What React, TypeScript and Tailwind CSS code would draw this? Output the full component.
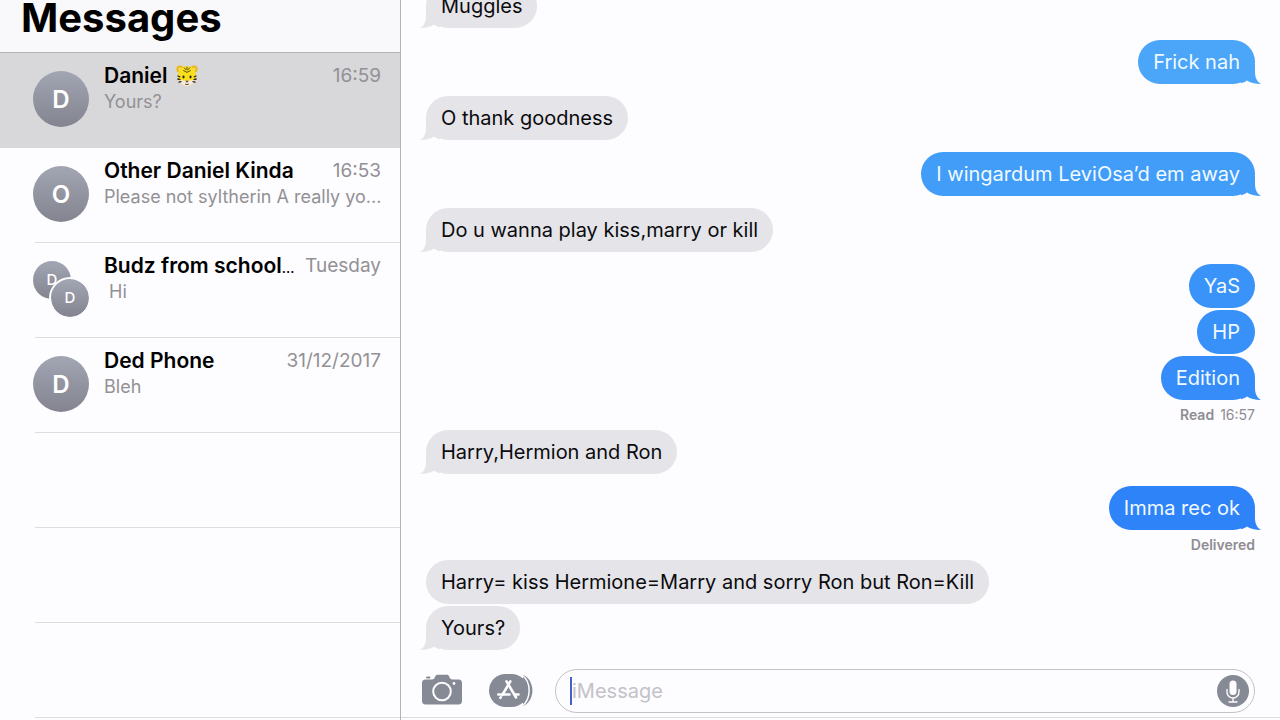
import cx from 'clsx';

type Conversation = {
	name: string;
	time: string;
	preview: string;
	initials: string[];
	tiger?: boolean;
	indent?: boolean;
	shortened?: boolean;
};

type Message = {
	text: string;
	mine?: boolean;
	tail?: boolean;
	color?: string;
	status?: { label: string; time?: string };
};

const conversations: Conversation[] = [
	{ name: 'Daniel', time: '16:59', preview: 'Yours?', initials: ['D'], tiger: true },
	{
		name: 'Other Daniel Kinda',
		time: '16:53',
		preview: 'Please not syltherin A really yo...',
		initials: ['O']
	},
	{
		name: 'Budz from school',
		time: 'Tuesday',
		preview: 'Hi',
		initials: ['D', 'D'],
		indent: true,
		shortened: true
	},
	{ name: 'Ded Phone', time: '31/12/2017', preview: 'Bleh', initials: ['D'] }
];

// consecutive messages of one sender are grouped together
const groups: Message[][] = [
	[{ text: 'Muggles', tail: true }],
	[{ text: 'Frick nah', mine: true, tail: true, color: 'bg-[#4ba5f9] text-[#4ba5f9]' }],
	[{ text: 'O thank goodness', tail: true }],
	[
		{
			text: 'I wingardum LeviOsa’d em away',
			mine: true,
			tail: true,
			color: 'bg-[#429df9] text-[#429df9]'
		}
	],
	[{ text: 'Do u wanna play kiss,marry or kill', tail: true }],
	[
		{ text: 'YaS', mine: true, color: 'bg-[#3a93f9] text-[#3a93f9]' },
		{ text: 'HP', mine: true, color: 'bg-[#3890f9] text-[#3890f9]' },
		{
			text: 'Edition',
			mine: true,
			tail: true,
			color: 'bg-[#368df9] text-[#368df9]',
			status: { label: 'Read', time: '16:57' }
		}
	],
	[{ text: 'Harry,Hermion and Ron', tail: true }],
	[
		{
			text: 'Imma rec ok',
			mine: true,
			tail: true,
			color: 'bg-[#2f83f8] text-[#2f83f8]',
			status: { label: 'Delivered' }
		}
	],
	[{ text: 'Harry= kiss Hermione=Marry and sorry Ron but Ron=Kill' }, { text: 'Yours?', tail: true }]
];

const Tiger = () => (
	<svg viewBox="0 0 24 24" className="ml-2 h-6 w-6 shrink-0" role="img" aria-label="tiger">
		<circle cx="5" cy="5" r="3.6" fill="#e9b813" />
		<circle cx="19" cy="5" r="3.6" fill="#e9b813" />
		<circle cx="5" cy="5" r="1.6" fill="#f3d98f" />
		<circle cx="19" cy="5" r="1.6" fill="#f3d98f" />
		<path
			d="M12 2.2C17.5 2.2 20.6 5.7 20.8 10.5C21 13 21.4 15.5 20.2 17.5C19 19.7 16 20.1 14.6 21.5C13.200 22.500 10.800 22.500 9.400 21.500C8 20.100 5 19.700 3.800 17.500C2.600 15.500 3 13 3.200 10.500C3.400 5.700 6.500 2.200 12 2.200Z"
			fill="#fbdf1c"
		/>
		<path
			d="M3.2 14.500C5.400 15 7 16.500 9.600 16.700H14.400C17 16.500 18.600 15 20.800 14.500C20.900 15.700 20.700 16.800 20.200 17.700C19 19.700 16 20.100 14.600 21.500C13.200 22.500 10.800 22.500 9.400 21.500C8 20.100 5 19.700 3.800 17.700C3.300 16.800 3.100 15.700 3.200 14.500Z"
			fill="#f4ece0"
		/>
		<g stroke="#4a4210" strokeWidth="0.900" strokeLinecap="round" fill="none">
			<path d="M12 3v3M9.300 3.800l1.400 1.700M14.700 3.800l-1.400 1.700M8.600 6.600l3.400 1.800 3.400-1.800" />
		</g>
		<g stroke="#2b2611" strokeWidth="1.300" strokeLinecap="round" fill="none">
			<path d="M3 12l1.700.8M2.800 15l2.200.6M4 18.200l2-.6M21 12l-1.700.8M21.200 15l-2.200.6M20 18.200l-2-.6" />
		</g>
		<ellipse cx="8.500" cy="13" rx="1.100" ry="1.400" fill="#2b2611" />
		<ellipse cx="15.500" cy="13" rx="1.100" ry="1.400" fill="#2b2611" />
		<path d="M10.300 16.800h3.400L12 18.700Z" fill="#54372c" />
		<path d="M10 20q2 1.200 4 0" stroke="#54372c" strokeWidth="0.900" fill="none" />
	</svg>
);

const avatarColors =
	'flex items-center justify-center rounded-full bg-linear-to-b from-[#a2a6b3] to-[#83848f] text-white';

const Avatar = ({ initials }: { initials: string[] }) => {
	if (initials.length > 1) {
		return (
			<span className="relative h-14 w-14 shrink-0">
				<span className={cx(avatarColors, 'h-[38px] w-[38px] text-[15px] font-medium')}>
					{initials[0]}
				</span>
				<span
					className={cx(
						avatarColors,
						'absolute -right-[2px] -bottom-[2px] box-content h-[38px] w-[38px] border-2 border-[#fdfcfe] bg-clip-padding text-[15px] font-medium'
					)}
				>
					{initials[1]}
				</span>
			</span>
		);
	}

	return (
		<span className={cx(avatarColors, 'h-14 w-14 shrink-0 pt-[2px] text-2xl font-semibold')}>
			{initials[0]}
		</span>
	);
};

const ConversationRow = ({ item, active }: { item: Conversation; active: boolean }) => (
	<li className={cx('h-[95px]', active && 'bg-[#d8d7da]')}>
		<button type="button" className="flex h-full w-full pl-[33px] text-left">
			<span className="flex h-full items-center pb-[3px]">
				<Avatar initials={item.initials} />
			</span>
			<span className="ml-[15px] flex h-full min-w-0 grow flex-col pt-[9px] pr-[19px]">
				<span className="flex h-7 items-center justify-between">
					<span className="flex min-w-0 items-center text-[21px] font-semibold whitespace-nowrap text-black">
						<span>
							{item.name}
							{item.shortened && <span className="text-sm font-medium">...</span>}
						</span>
						{item.tiger && <Tiger />}
					</span>
					<span className="shrink-0 text-[19px] text-[#929195]">{item.time}</span>
				</span>
				<span
					className={cx(
						'h-6 overflow-hidden text-[18px] leading-6 whitespace-nowrap text-[#929195]',
						item.indent && 'pl-[5px]'
					)}
				>
					{item.preview}
				</span>
			</span>
		</button>
		{!active && <div className="-mt-px ml-[35px] h-px bg-[#dddce1]" />}
	</li>
);

const Tail = ({ mine }: { mine?: boolean }) => (
	<svg
		viewBox="0 0 20 20"
		aria-hidden="true"
		className={cx('absolute bottom-0 h-5 w-5', mine ? '-right-[6px]' : '-left-[6px] -scale-x-100')}
	>
		<path
			d="M0 0H14V8C14 14 16 17.500 20 20C14 20 9 18.500 6 16.500C4 18 2 18.800 0 19.200Z"
			fill="currentColor"
		/>
	</svg>
);

const Bubble = ({ message }: { message: Message }) => (
	<div className={cx('flex flex-col', message.mine ? 'items-end' : 'items-start')}>
		<div
			className={cx(
				'relative flex h-11 items-center rounded-[22px] px-[15px]',
				message.mine ? message.color : 'bg-[#e5e4e9] text-[#e5e4e9]'
			)}
		>
			{message.tail && <Tail mine={message.mine} />}
			<span
				className={cx(
					'relative text-xl whitespace-nowrap',
					message.mine ? 'text-[#f0faff]' : 'text-[#0b0b0d]'
				)}
			>
				{message.text}
			</span>
		</div>
		{message.status && (
			<div className="-mb-3 flex h-[30px] items-center gap-[6px] text-sm text-[#8e8d93]">
				<span className="font-semibold">{message.status.label}</span>
				{message.status.time && <span>{message.status.time}</span>}
			</div>
		)}
	</div>
);

const Composer = () => (
	<form className="flex h-[49px] shrink-0 items-start border-b border-[#dddce1] pr-[25px] pl-[21px]">
		<button type="button" aria-label="Camera" className="h-11 w-10">
			<svg viewBox="0 0 40 44" className="h-11 w-10">
				<rect x="4" y="7.500" width="4.500" height="2" rx="1" fill="#858a95" />
				<path
					d="M3.500 10.500H10c1.500 0 2-.6 2.600-1.700l.9-1.700c.5-1 1-1.400 2.200-1.400h9c1.200 0 1.700.4 2.200 1.400l.9 1.700c.6 1.100 1.100 1.700 2.600 1.700h6.100c2.300 0 3.500 1.200 3.500 3.500v18c0 2.300-1.200 3.500-3.500 3.500h-33C1.200 35.500 0 34.300 0 32V14c0-2.300 1.200-3.500 3.500-3.500Z"
					fill="#858a95"
				/>
				<circle cx="20" cy="22.500" r="8.800" fill="none" stroke="#fdfcfe" strokeWidth="2" />
				<circle cx="32" cy="14.500" r="1.400" fill="#fdfcfe" />
			</svg>
		</button>
		<button type="button" aria-label="Apps" className="ml-[27px] h-11 w-11">
			<svg viewBox="0 0 44 44" className="h-11 w-11">
				<path d="M34 6C46.500 11 46.500 32 34 37Z" fill="#858a95" />
				<rect x="0" y="5" width="39" height="33" rx="16.500" fill="#858a95" />
				<path
					d="M33 6C42.500 13 42.500 30 33 37"
					fill="none"
					stroke="#fdfcfe"
					strokeWidth="1.500"
				/>
				<g stroke="#fdfcfe" strokeWidth="2.600" strokeLinecap="round" fill="none">
					<path d="M17.500 12.300l9.600 16.200" />
					<path d="M21.300 12.300l-8 13.700M11.800 28.300l-.4.600" />
					<path d="M9.300 25.500h11.200M25.800 25.500h3.700" />
				</g>
			</svg>
		</button>
		<div className="ml-[22px] flex h-11 grow items-center rounded-full border border-[#c3c2c8] bg-[#fdfcfe] pr-[5px] pl-[14px]">
			<span className="h-7 w-[2px] shrink-0 bg-[#3f62cf]" />
			<input
				type="text"
				aria-label="iMessage"
				placeholder="iMessage"
				className="h-full min-w-0 grow bg-transparent text-xl outline-none placeholder:text-[#c3c2c8]"
			/>
			<button type="button" aria-label="Dictate" className="h-8 w-8 shrink-0">
				<svg viewBox="0 0 32 32" className="h-8 w-8">
					<circle cx="16" cy="16" r="16" fill="#858a95" />
					<rect x="12.500" y="5.500" width="7" height="14.500" rx="3.500" fill="#fdfcfe" />
					<path
						d="M10 14.500v2.500a6 6 0 0 0 12 0v-2.500M16 23v4M12 27h8"
						fill="none"
						stroke="#fdfcfe"
						strokeWidth="1.400"
						strokeLinecap="round"
					/>
				</svg>
			</button>
		</div>
	</form>
);

const App = () => {
	return (
		<div className="flex h-screen overflow-hidden bg-[#fdfcfe] font-['Inter','Liberation_Sans',sans-serif]">
			<aside className="flex w-[401px] shrink-0 flex-col overflow-hidden border-r border-[#b4b3b8]">
				<header className="flex h-[53px] shrink-0 items-end border-b border-[#b4b3b8] bg-[#f9f8fb] pb-4 pl-[21px]">
					<h1 className="text-[40px] leading-9 font-bold text-black">Messages</h1>
				</header>
				<ul className="flex flex-col">
					{conversations.map((c, i) => (
						<ConversationRow key={c.name} item={c} active={i === 0} />
					))}
				</ul>
				{[0, 1, 2].map(i => (
					<div key={i} className="ml-[35px] h-[95px] shrink-0 border-b border-[#dddce1]" />
				))}
			</aside>
			<main className="flex min-w-0 grow flex-col pb-[2px]">
				<section className="flex min-h-0 grow flex-col justify-end gap-3 overflow-hidden px-[19px] pb-[19px]">
					{groups.map((group, i) => (
						<div key={i} className="flex shrink-0 flex-col gap-[2px] px-[6px]">
							{group.map(m => (
								<Bubble key={m.text} message={m} />
							))}
						</div>
					))}
				</section>
				<Composer />
			</main>
		</div>
	);
};

export default App;
